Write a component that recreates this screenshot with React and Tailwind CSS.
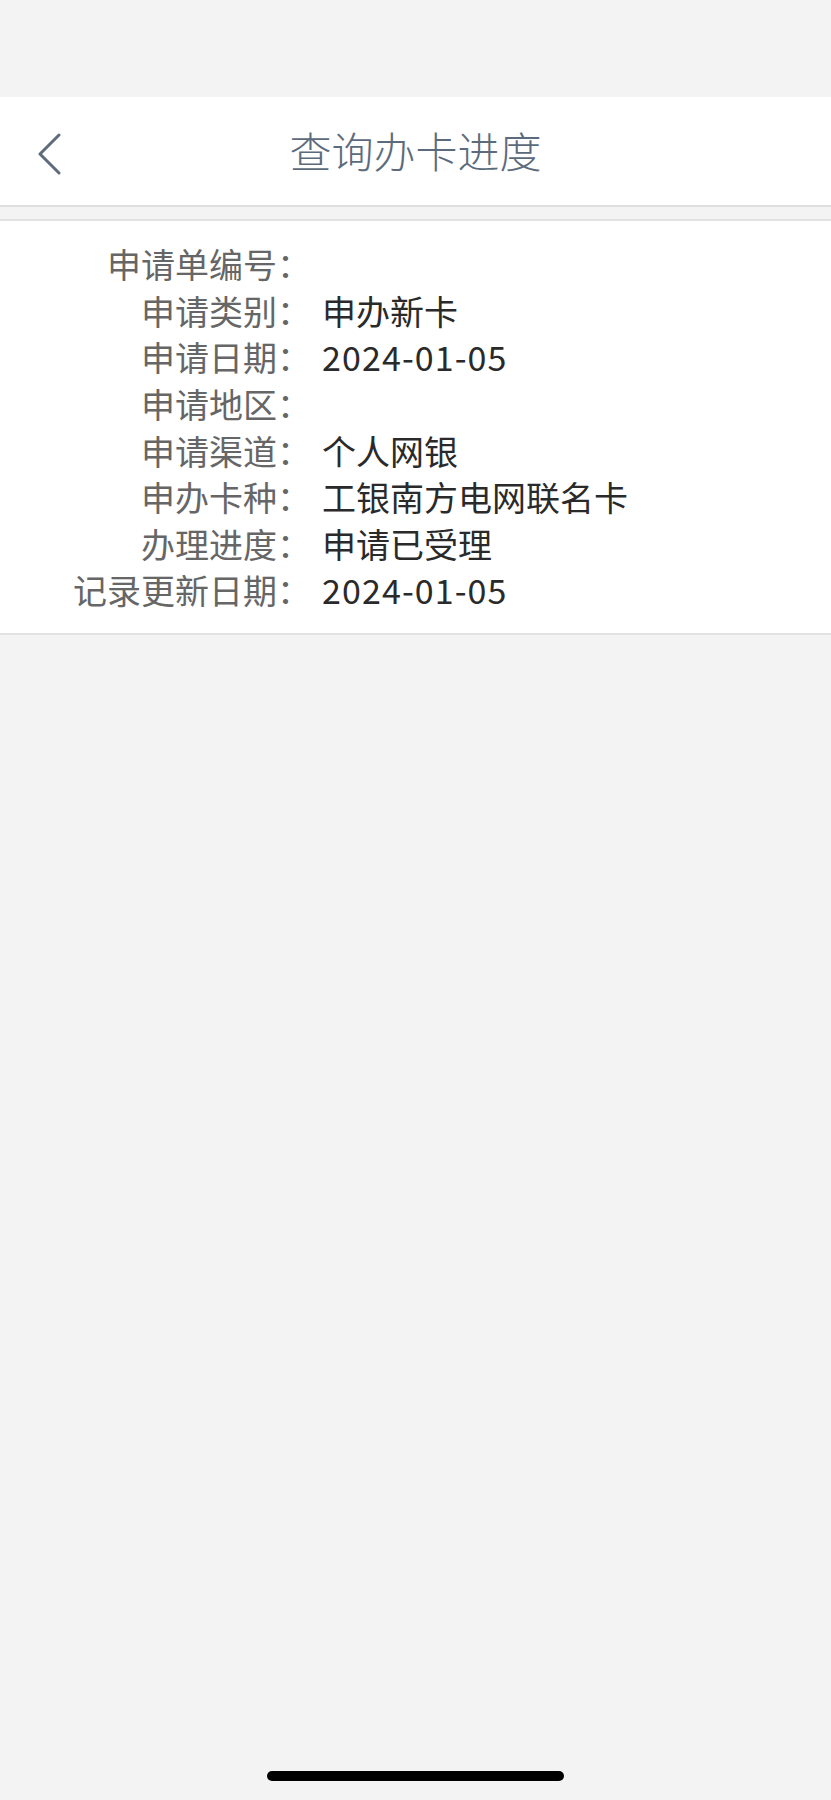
import React from "react";

const rows = [
  ["申请单编号：", ""],
  ["申请类别：", "申办新卡"],
  ["申请日期：", "2024-01-05"],
  ["申请地区：", ""],
  ["申请渠道：", "个人网银"],
  ["申办卡种：", "工银南方电网联名卡"],
  ["办理进度：", "申请已受理"],
  ["记录更新日期：", "2024-01-05"],
];

export default function App() {
  return (
    <div
      className="w-[831px] h-[1800px] bg-[#f3f3f3] flex flex-col relative overflow-hidden"
      style={{ fontFamily: '"Noto Sans CJK SC", "Noto Sans", sans-serif' }}
    >
      <div className="h-[97px]" />
      <div className="h-[110px] bg-white border-b-2 border-[#dedede] flex items-center relative">
        <div className="absolute left-[36px] top-[36px]">
          <svg width="26" height="42" viewBox="0 0 26 42" fill="none">
            <path d="M23 2 L4 21 L23 40" stroke="#5d6b7b" strokeWidth="3" strokeLinecap="round" strokeLinejoin="round" />
          </svg>
        </div>
        <div className="w-full text-center text-[42px] leading-none font-light text-[#5c6b7c] -mt-[2px]">查询办卡进度</div>
      </div>
      <div className="h-[12px]" />
      <div className="bg-white border-t-2 border-b-2 border-[#e2e2e2] pt-[20px] pb-[19px]">
        {rows.map(([k, v], i) => (
          <div key={i} className="flex h-[46.6px] items-center">
            <div className="w-[311px] shrink-0 text-right text-[34px] leading-none text-[#666666]">{k}</div>
            <div className={"pl-[11px] text-[34px] leading-none text-[#2a2a2a] " + (/^\d/.test(v) ? "tracking-[1.1px]" : "")}>{v}</div>
          </div>
        ))}
      </div>
      <div className="absolute left-[267px] top-[1771px] w-[297px] h-[10px] rounded-full bg-black" />
    </div>
  );
}
